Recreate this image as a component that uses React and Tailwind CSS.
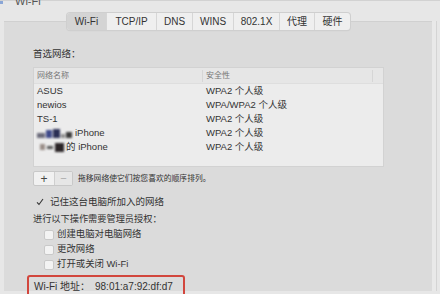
const tabs = [
  { label: "Wi-Fi", w: "w-[40px]", active: true },
  { label: "TCP/IP", w: "w-[50px]" },
  { label: "DNS", w: "w-[36px]" },
  { label: "WINS", w: "w-[41px]" },
  { label: "802.1X", w: "w-[46px]" },
  { label: "代理", w: "w-[35px]" },
  { label: "硬件", w: "w-[35px]" },
];

const networks = [
  { name: "ASUS", security: "WPA2 个人级" },
  { name: "newios", security: "WPA/WPA2 个人级" },
  { name: "TS-1", security: "WPA2 个人级" },
  { name: "iPhone", blur: "a", security: "WPA2 个人级" },
  { name: "的 iPhone", blur: "b", security: "WPA2 个人级" },
];

const Blur = ({ kind }) =>
  kind === "a" ? (
    <span className="inline-flex items-end gap-[1px] mr-[3px] blur-[0.8px]">
      <span className="w-[8px] h-[5px] bg-[#6b6b7a]" />
      <span className="w-[6px] h-[8px] bg-[#3f4a8a]" />
      <span className="w-[7px] h-[9px] bg-[#2b2f55]" />
      <span className="w-[4px] h-[4px] bg-[#8a8a8a]" />
      <span className="w-[6px] h-[6px] bg-[#3a3a3a]" />
    </span>
  ) : (
    <span className="inline-flex items-center gap-[2px] ml-[3px] mr-[2px] blur-[0.8px]">
      <span className="w-[5px] h-[6px] bg-[#9a8e88]" />
      <span className="w-[6px] h-[3px] bg-[#555]" />
      <span className="w-[9px] h-[9px] bg-[#2a2426]" />
    </span>
  );

const Check = ({ checked }) => (
  <span className="w-[10px] h-[10px] rounded-[2px] bg-[#f3f3f3] border border-[#c9c9c9] shrink-0 flex items-center justify-center">
    {checked && (
      <svg width="8" height="8" viewBox="0 0 8 8">
        <path d="M1.2 4.3 L3.1 6.3 L6.8 1.2" fill="none" stroke="#333" strokeWidth="1.2" />
      </svg>
    )}
  </span>
);

export default function App() {
  return (
    <div
      className="w-[440px] h-[294px] overflow-hidden bg-[#e7e7e7] text-[#333] flex flex-col"
      style={{ fontFamily: '"Liberation Sans", "Noto Sans CJK SC", sans-serif' }}
    >
      <div className="h-[13px] shrink-0 border-t border-[#d2d2d2] relative">
        <span className="absolute left-0 top-0 w-[3px] h-[3px] bg-[#8aa6d6]" />
        <span className="absolute left-[15px] -top-[8px] text-[11px] text-[#555]">Wi-Fi</span>
      </div>

      <div className="h-[17px] shrink-0 flex pl-[67px] relative z-10">
        <div className="flex rounded-[3px] overflow-hidden bg-[#efefef] shadow-[0_0_0_1px_#cfcfcf,0_1px_1px_#c4c4c4]">
          {tabs.map((t) => (
            <div
              key={t.label}
              className={`${t.w} flex items-center justify-center text-[10px] border-r border-[#d6d6d6] last:border-r-0 ${
                t.active ? "bg-[#d4d4d4]" : ""
              }`}
            >
              {t.label}
            </div>
          ))}
        </div>
      </div>

      <div className="flex shrink-0 h-[270px] -mt-[9px]">
        <div className="w-[4px]" />
        <div className="w-[428px] bg-[#dbdbdb] border-t border-[#d0d0d0] pt-[25px] pl-[29px] flex flex-col">
          <div className="h-[14px] leading-[14px] text-[9.5px]">首选网络：</div>

          <div className="mt-[6px] w-[351px] h-[100px] shrink-0 bg-[#ececec] border border-[#d2d2d2] flex flex-col">
            <div className="h-[16px] flex items-center bg-[#e6e6e6] border-b border-[#dedede] text-[8px] text-[#777]">
              <div className="w-[169px] pl-[3px] border-r border-[#d6d6d6] h-[12px] leading-[12px]">网络名称</div>
              <div className="w-[170px] pl-[3px] border-r border-[#d6d6d6] h-[12px] leading-[12px]">安全性</div>
            </div>
            {networks.map((n) => (
              <div key={n.name} className="h-[14px] flex items-center text-[9.5px]">
                <div className="w-[169px] pl-[3px] flex items-center">
                  {n.blur && <Blur kind={n.blur} />}
                  {n.name}
                </div>
                <div className="pl-[3px]">{n.security}</div>
              </div>
            ))}
          </div>

          <div className="mt-[4px] h-[15px] shrink-0 flex items-center">
            <div className="flex h-[15px] border border-[#c8c8c8] bg-[#f1f1f1] rounded-[2px]">
              <div className="w-[21px] flex items-center justify-center text-[12px] text-[#444] border-r border-[#cfcfcf]">+</div>
              <div className="w-[17px] flex items-center justify-center text-[11px] text-[#aaa] bg-[#e6e6e6]">−</div>
            </div>
            <span className="ml-[5px] text-[7.8px] text-[#333]">拖移网络使它们按您喜欢的顺序排列。</span>
          </div>

          <div className="mt-[9px] h-[14px] shrink-0 flex items-center gap-[3px] text-[9.5px]">
            <svg width="8" height="8" viewBox="0 0 8 8" className="ml-[3px]">
              <path d="M1 4.4 L3 6.5 L7 1" fill="none" stroke="#333" strokeWidth="1.1" />
            </svg>
            <span className="ml-[3px]">记住这台电脑所加入的网络</span>
          </div>

          <div className="mt-[4px] h-[14px] shrink-0 flex items-center text-[9.2px]">进行以下操作需要管理员授权：</div>

          <div className="flex flex-col shrink-0 pl-[11px]">
            {["创建电脑对电脑网络", "更改网络", "打开或关闭 Wi-Fi"].map((l) => (
              <div key={l} className="h-[15px] flex items-center gap-[3px] text-[9.4px]">
                <Check />
                <span>{l}</span>
              </div>
            ))}
          </div>

          <div className="mt-[3px] shrink-0 -ml-[6px] w-[158px] h-[22px] border-2 border-[#d2463d] rounded-[3px] flex items-center pl-[5px] text-[10px]">
            <span className="w-[61px]">Wi-Fi 地址：</span>
            <span>98:01:a7:92:df:d7</span>
          </div>
        </div>
        <div className="flex-1 bg-[#e9e9e9] border-r border-[#d4d4d4] mr-[3px]" />
      </div>
    </div>
  );
}
